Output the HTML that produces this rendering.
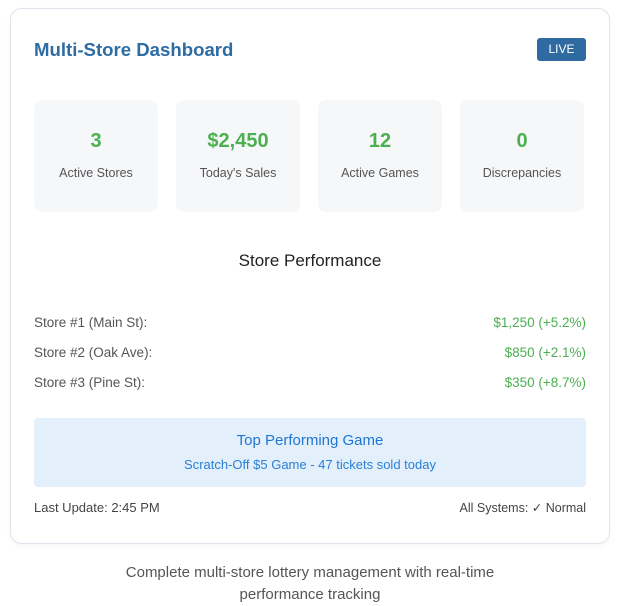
<!DOCTYPE html>
<html><head><style>
body{margin:0;width:620px;height:604px;background:#fff;font-family:"Liberation Sans",sans-serif;position:relative;overflow:hidden}
.card{position:absolute;left:10px;top:8px;width:598px;height:534px;border:1px solid #dfe3ec;border-radius:12px;box-shadow:0 2px 6px rgba(0,0,0,0.04)}
.a{position:absolute;white-space:nowrap}
.title{left:23px;top:30px;font-size:18.6px;font-weight:bold;color:#2e6ca4}
.live{left:526px;top:29px;width:49px;height:23px;background:#2f6aa0;border-radius:3px;color:#fff;font-size:12px;line-height:23px;text-align:center}
.box{position:absolute;top:91px;width:124px;height:112px;background:#f6f7f9;border-radius:8px;text-align:center}
.num{position:absolute;top:30px;width:100%;font-size:20px;font-weight:bold;color:#4caf50}
.lab{position:absolute;top:66px;width:100%;font-size:12.5px;color:#555}
.row{left:23px;width:552px;font-size:13.5px;color:#555;display:flex;justify-content:space-between}
.row span:last-child{color:#4caf50}
</style></head><body>
<div class="card">
<div class="a title">Multi-Store Dashboard</div>
<div class="a live">LIVE</div>
<div class="box" style="left:23px"><div class="num">3</div><div class="lab">Active Stores</div></div>
<div class="box" style="left:165px"><div class="num">$2,450</div><div class="lab">Today's Sales</div></div>
<div class="box" style="left:307px"><div class="num">12</div><div class="lab">Active Games</div></div>
<div class="box" style="left:449px"><div class="num">0</div><div class="lab">Discrepancies</div></div>
<div class="a" style="left:0;width:598px;text-align:center;top:242px;font-size:17px;color:#222">Store Performance</div>
<div class="a row" style="top:306px"><span>Store #1 (Main St):</span><span>$1,250 (+5.2%)</span></div>
<div class="a row" style="top:336px"><span>Store #2 (Oak Ave):</span><span>$850 (+2.1%)</span></div>
<div class="a row" style="top:366px"><span>Store #3 (Pine St):</span><span>$350 (+8.7%)</span></div>
<div class="a" style="left:23px;top:409px;width:552px;height:69px;background:#e3f0fc;border-radius:4px;text-align:center">
<div style="margin-top:14px;font-size:15px;color:#1e76d2">Top Performing Game</div>
<div style="margin-top:8px;font-size:13px;color:#2a7fd6">Scratch-Off $5 Game - 47 tickets sold today</div>
</div>
<div class="a" style="left:23px;top:491px;font-size:13px;color:#444">Last Update: 2:45 PM</div>
<div class="a" style="right:23px;top:491px;font-size:12.5px;color:#444">All Systems: ✓ Normal</div>
</div>
<div class="a" style="left:0;width:620px;top:562px;text-align:center;font-size:15px;line-height:22px;color:#555">Complete multi-store lottery management with real-time<br>performance tracking</div>
</body></html>
